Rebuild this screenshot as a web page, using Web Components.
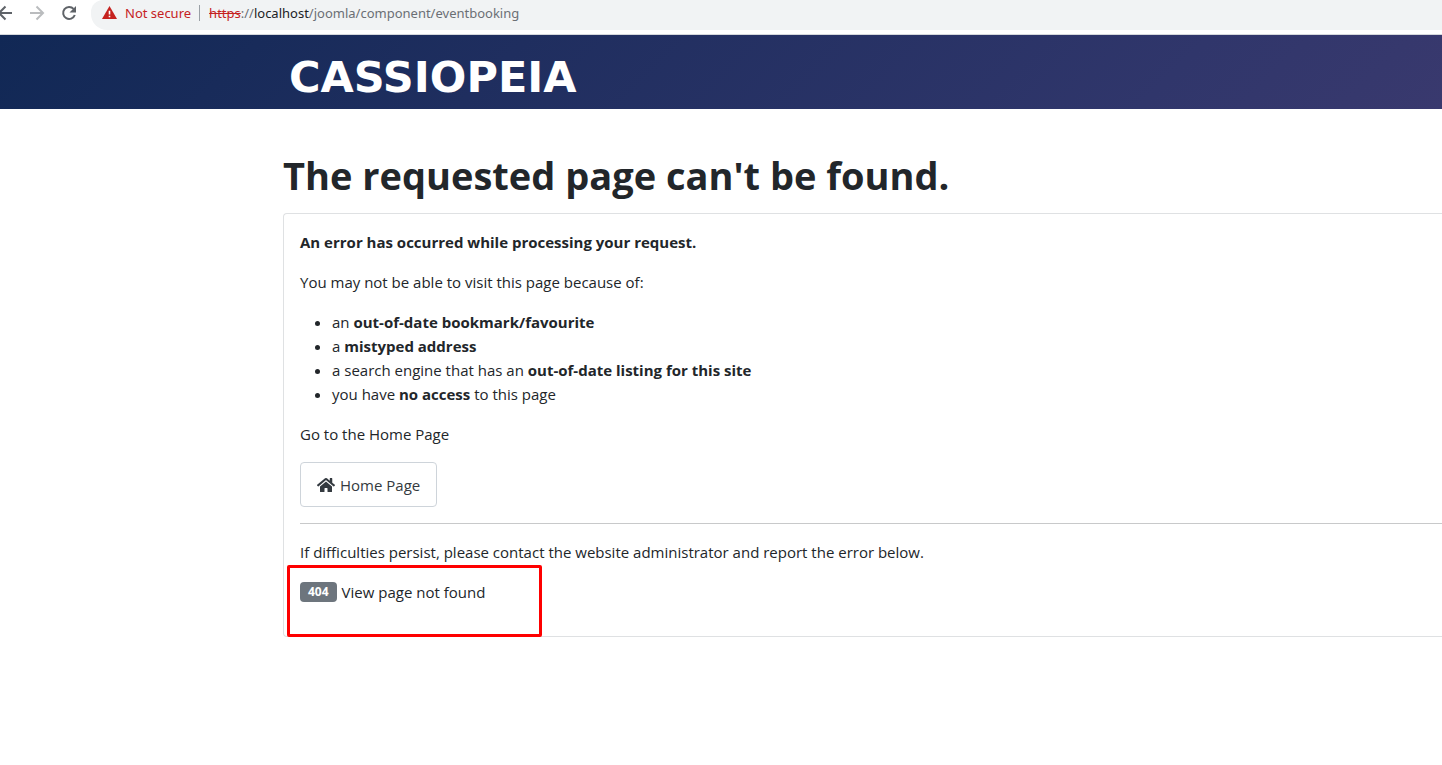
<!DOCTYPE html>
<html lang="en">
<head>
<meta charset="utf-8">
<meta name="viewport" content="width=device-width, initial-scale=1">
<title>The requested page can't be found.</title>
<style>
  body {
    margin: 0;
    background: #fff;
    color: #22262a;
    font-family: "Open Sans", "Noto Sans", sans-serif;
    font-size: 15px;
    line-height: 24px;
    overflow-x: hidden;
    --page-gutter: 283px;
  }
</style>
</head>
<body>
<browser-bar></browser-bar>
<site-header>CASSIOPEIA</site-header>
<error-page>
  <span slot="title">The requested page can't be found.</span>
  <error-code slot="error" code="404">View page not found</error-code>
</error-page>

<script>
class BrowserBar extends HTMLElement {
  constructor() {
    super();
    this.shadowDOM = this.attachShadow({ mode: 'open' });
  }

  connectedCallback() {
    this.render();
  }

  render() {
    this.shadowDOM.innerHTML = `
      <style>
        :host {
          display: flex;
          align-items: flex-start;
          height: 34px;
          overflow: hidden;
          background: #fff;
          border-bottom: 1px solid #d5d8dc;
          font-family: "Noto Sans", "Open Sans", sans-serif;
          font-size: 13px;
          line-height: 26px;
        }

        nav {
          display: flex;
          flex: none;
          gap: 8px;
          width: 91px;
        }

        button {
          flex: none;
          width: 24px;
          height: 26px;
          padding: 0;
          border: 0;
          background: none;
          color: #5f6368;
        }

        button:first-child {
          margin-left: -7px;
        }

        button:disabled {
          color: #babcbe;
        }

        svg {
          display: block;
        }

        .address {
          display: flex;
          flex: 1;
          align-items: center;
          height: 30px;
          padding: 0 0 4px 11px;
          box-sizing: border-box;
          background: #f1f3f4;
          border-radius: 12px 0 0 16px;
          white-space: nowrap;
        }

        .warning {
          margin-left: 8px;
          color: #c5221f;
        }

        .divider {
          width: 1px;
          height: 16px;
          margin: 0 9px 0 8px;
          background: #9aa0a6;
        }

        a {
          color: #6b6f74;
          text-decoration: none;
        }

        s {
          color: #c5221f;
        }

        b {
          color: #202124;
          font-weight: 400;
        }
      </style>

      <nav aria-label="Browser">
        <button type="button" aria-label="Back">
          <svg width="24" height="26" viewBox="0 0 24 26" fill="none" stroke="currentColor" stroke-width="2"><path d="M19 13H6M12.500 6.500L6 13l6.500 6.500"/></svg>
        </button>
        <button type="button" aria-label="Forward" disabled>
          <svg width="24" height="26" viewBox="0 0 24 26" fill="none" stroke="currentColor" stroke-width="2"><path d="M5 13h13M11.500 6.500L18 13l-6.500 6.500"/></svg>
        </button>
        <button type="button" aria-label="Reload">
          <svg width="24" height="26" viewBox="0 0 24 26"><path d="M16.600 8.900A6 6 0 1 0 17.800 15" fill="none" stroke="currentColor" stroke-width="2"/><path d="M19 6v6.500h-6.500z" fill="currentColor"/></svg>
        </button>
      </nav>
      <div class="address">
        <svg width="15" height="14" viewBox="0 0 15 14"><path d="M7.500 0L15 13H0z" fill="#c5221f"/><path d="M6.700 4.800h1.600v3.700H6.700zM6.700 9.700h1.600v1.600H6.700z" fill="#fff"/></svg>
        <span class="warning">Not secure</span>
        <span class="divider"></span>
        <a href="#"><s>https</s>://<b>localhost</b>/joomla/component/eventbooking</a>
      </div>
    `;
  }
}

class SiteHeader extends HTMLElement {
  constructor() {
    super();
    this.shadowDOM = this.attachShadow({ mode: 'open' });
  }

  connectedCallback() {
    this.render();
  }

  render() {
    this.shadowDOM.innerHTML = `
      <style>
        :host {
          display: block;
          padding: 18px 0 8px calc(var(--page-gutter) + 6px);
          background: linear-gradient(135deg, #112855 0%, #1f2e5f 35%, #30366b 80%, #39396e 100%);
        }

        header {
          display: flex;
        }

        a {
          color: #fff;
          font-family: "DejaVu Sans", sans-serif;
          font-size: 43px;
          font-weight: 700;
          line-height: 48px;
          text-decoration: none;
        }
      </style>

      <header><a href="#"><slot></slot></a></header>
    `;
  }
}

class ErrorPage extends HTMLElement {
  constructor() {
    super();
    this.shadowDOM = this.attachShadow({ mode: 'open' });
  }

  connectedCallback() {
    this.render();
  }

  render() {
    this.shadowDOM.innerHTML = `
      <style>
        :host {
          display: block;
          padding: 42px 0 48px var(--page-gutter);
        }

        h1 {
          margin: 0 0 14px;
          font-size: 38px;
          font-weight: 700;
          line-height: 48px;
        }

        /* The card runs on past the right edge of the window */
        .card {
          padding: 16px 0 16px 16px;
          border: 1px solid #dfe1e3;
          border-right: 0;
          border-radius: 4px 0 0 4px;
        }

        p, ul {
          margin: 0 0 16px;
        }

        ul {
          padding-left: 32px;
        }

        .home {
          display: inline-flex;
          align-items: center;
          gap: 5px;
          padding: 10px 16px 9px;
          border: 1px solid #ced4da;
          border-radius: 4px;
          color: #343a40;
          text-decoration: none;
        }

        .action {
          display: flex;
        }

        hr {
          height: 1px;
          margin: 0 0 16px;
          border: 0;
          background: #c8c9ca;
        }
      </style>

      <main>
        <h1><slot name="title"></slot></h1>
        <div class="card">
          <p><strong>An error has occurred while processing your request.</strong></p>
          <p>You may not be able to visit this page because of:</p>
          <ul>
            <li>an <strong>out-of-date bookmark/favourite</strong></li>
            <li>a <strong>mistyped address</strong></li>
            <li>a search engine that has an <strong>out-of-date listing for this site</strong></li>
            <li>you have <strong>no access</strong> to this page</li>
          </ul>
          <p>Go to the Home Page</p>
          <p class="action">
            <a class="home" href="#">
              <svg width="18" height="16" viewBox="0 0 576 512" fill="currentColor" aria-hidden="true"><path d="M280.370 148.260L96 300.110V464a16 16 0 0 0 16 16l112.060-.290a16 16 0 0 0 15.920-16V368a16 16 0 0 1 16-16h64a16 16 0 0 1 16 16v95.640a16 16 0 0 0 16 16.050L464 480a16 16 0 0 0 16-16V300L295.670 148.260a12.190 12.190 0 0 0-15.300 0zM571.600 251.470L488 182.560V44.050a12 12 0 0 0-12-12h-56a12 12 0 0 0-12 12v72.610L318.470 43a48 48 0 0 0-61 0L4.340 251.470a12 12 0 0 0-1.600 16.900l25.500 31A12 12 0 0 0 45.150 301l235.220-193.740a12.190 12.190 0 0 1 15.300 0L530.900 301a12 12 0 0 0 16.900-1.600l25.500-31a12 12 0 0 0-1.700-16.930z"/></svg>
              <span>Home Page</span>
            </a>
          </p>
          <hr>
          <p>If difficulties persist, please contact the website administrator and report the error below.</p>
          <slot name="error"></slot>
        </div>
      </main>
    `;
  }
}

class ErrorCode extends HTMLElement {
  constructor() {
    super();
    this.shadowDOM = this.attachShadow({ mode: 'open' });
  }

  connectedCallback() {
    this.render();
  }

  render() {
    this.shadowDOM.innerHTML = `
      <style>
        :host {
          display: flex;
          position: relative;
          align-items: center;
          gap: 5px;
          margin-bottom: 16px;
        }

        .badge {
          padding: 0 8px;
          border-radius: 4px;
          background: #6d757d;
          color: #fff;
          font-size: 12px;
          font-weight: 700;
          line-height: 20px;
        }

        /* Red frame drawn around the message */
        .marker {
          position: absolute;
          top: -15px;
          left: -13px;
          width: 255px;
          height: 72px;
          box-sizing: border-box;
          border: 3px solid #fe0000;
          border-radius: 2px;
          pointer-events: none;
        }
      </style>

      <span class="badge">${this.getAttribute('code')}</span>
      <span><slot></slot></span>
      <span class="marker"></span>
    `;
  }
}

customElements.define('browser-bar', BrowserBar);
customElements.define('site-header', SiteHeader);
customElements.define('error-page', ErrorPage);
customElements.define('error-code', ErrorCode);
</script>
</body>
</html>
